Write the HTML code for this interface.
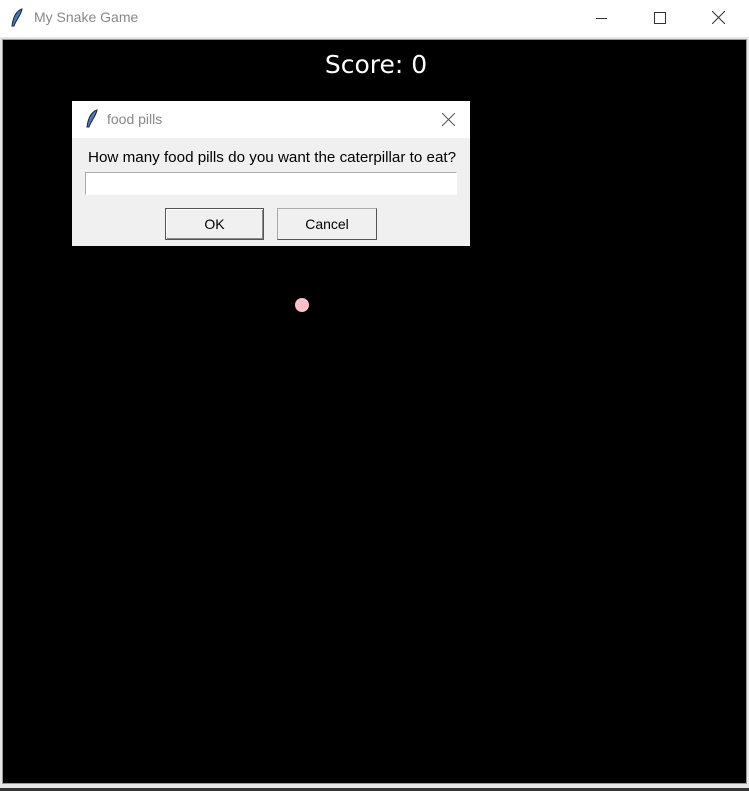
<!DOCTYPE html><html><head><style>
body{margin:0;width:749px;height:791px;position:relative;overflow:hidden;background:#f0f0f0;font-family:"Liberation Sans",sans-serif}
.a{position:absolute}
</style></head><body>
<div class="a" style="left:0;top:0;width:749px;height:37px;background:#fff"></div>
<svg class="a" style="left:10px;top:8px" width="14" height="20"><path d="M12 1 C6 3 3 10 2 18 L4 18 C6 12 11 7 12 1Z" fill="#4a78b8" stroke="#223" stroke-width="1"/></svg>
<div class="a" style="left:34px;top:9px;font-size:14px;color:#888">My Snake Game</div>
<div class="a" style="left:596px;top:18px;width:11px;height:1px;background:#333"></div>
<div class="a" style="left:654px;top:12px;width:10px;height:10px;border:1px solid #333"></div>
<svg class="a" style="left:712px;top:11px" width="13" height="13"><path d="M0 0L13 13M13 0L0 13" stroke="#333"/></svg>
<div class="a" style="left:0;top:37px;width:749px;height:751px;background:#e6e6e6"></div>
<div class="a" style="left:2px;top:39px;width:743px;height:743px;background:#000;border:1px solid #999"></div>
<div class="a" style="left:0;top:788px;width:749px;height:3px;background:#333"></div>
<div class="a" style="left:290px;top:50px;width:172px;text-align:center;font-family:'DejaVu Sans',sans-serif;font-size:25px;color:#fff">Score: 0</div>
<div class="a" style="left:295px;top:298px;width:14px;height:14px;border-radius:50%;background:#ffc0cb"></div>
<div class="a" style="left:72px;top:101px;width:398px;height:145px;background:#f0f0f0"></div>
<div class="a" style="left:72px;top:101px;width:398px;height:37px;background:#fff"></div>
<svg class="a" style="left:85px;top:109px" width="14" height="20"><path d="M12 1 C6 3 3 10 2 18 L4 18 C6 12 11 7 12 1Z" fill="#4a78b8" stroke="#223" stroke-width="1"/></svg>
<div class="a" style="left:107px;top:111px;font-size:14px;color:#888">food pills</div>
<svg class="a" style="left:442px;top:113px" width="13" height="13"><path d="M0 0L13 13M13 0L0 13" stroke="#555"/></svg>
<div class="a" style="left:88px;top:149px;font-size:15.2px;color:#000">How many food pills do you want the caterpillar to eat?</div>
<div class="a" style="left:85px;top:172px;width:370px;height:21px;background:#fff;border:1px solid #aaa;border-right-color:#fff;border-bottom-color:#fff"></div>
<div class="a" style="left:165px;top:208px;width:97px;height:30px;border:1px solid #555;box-shadow:inset 1px 1px #fff,inset -1px -1px #888;text-align:center;line-height:30px;font-size:14px">OK</div>
<div class="a" style="left:277px;top:208px;width:98px;height:30px;border:1px solid #aaa;border-right-color:#555;border-bottom-color:#555;text-align:center;line-height:30px;font-size:14px">Cancel</div>
</body></html>
